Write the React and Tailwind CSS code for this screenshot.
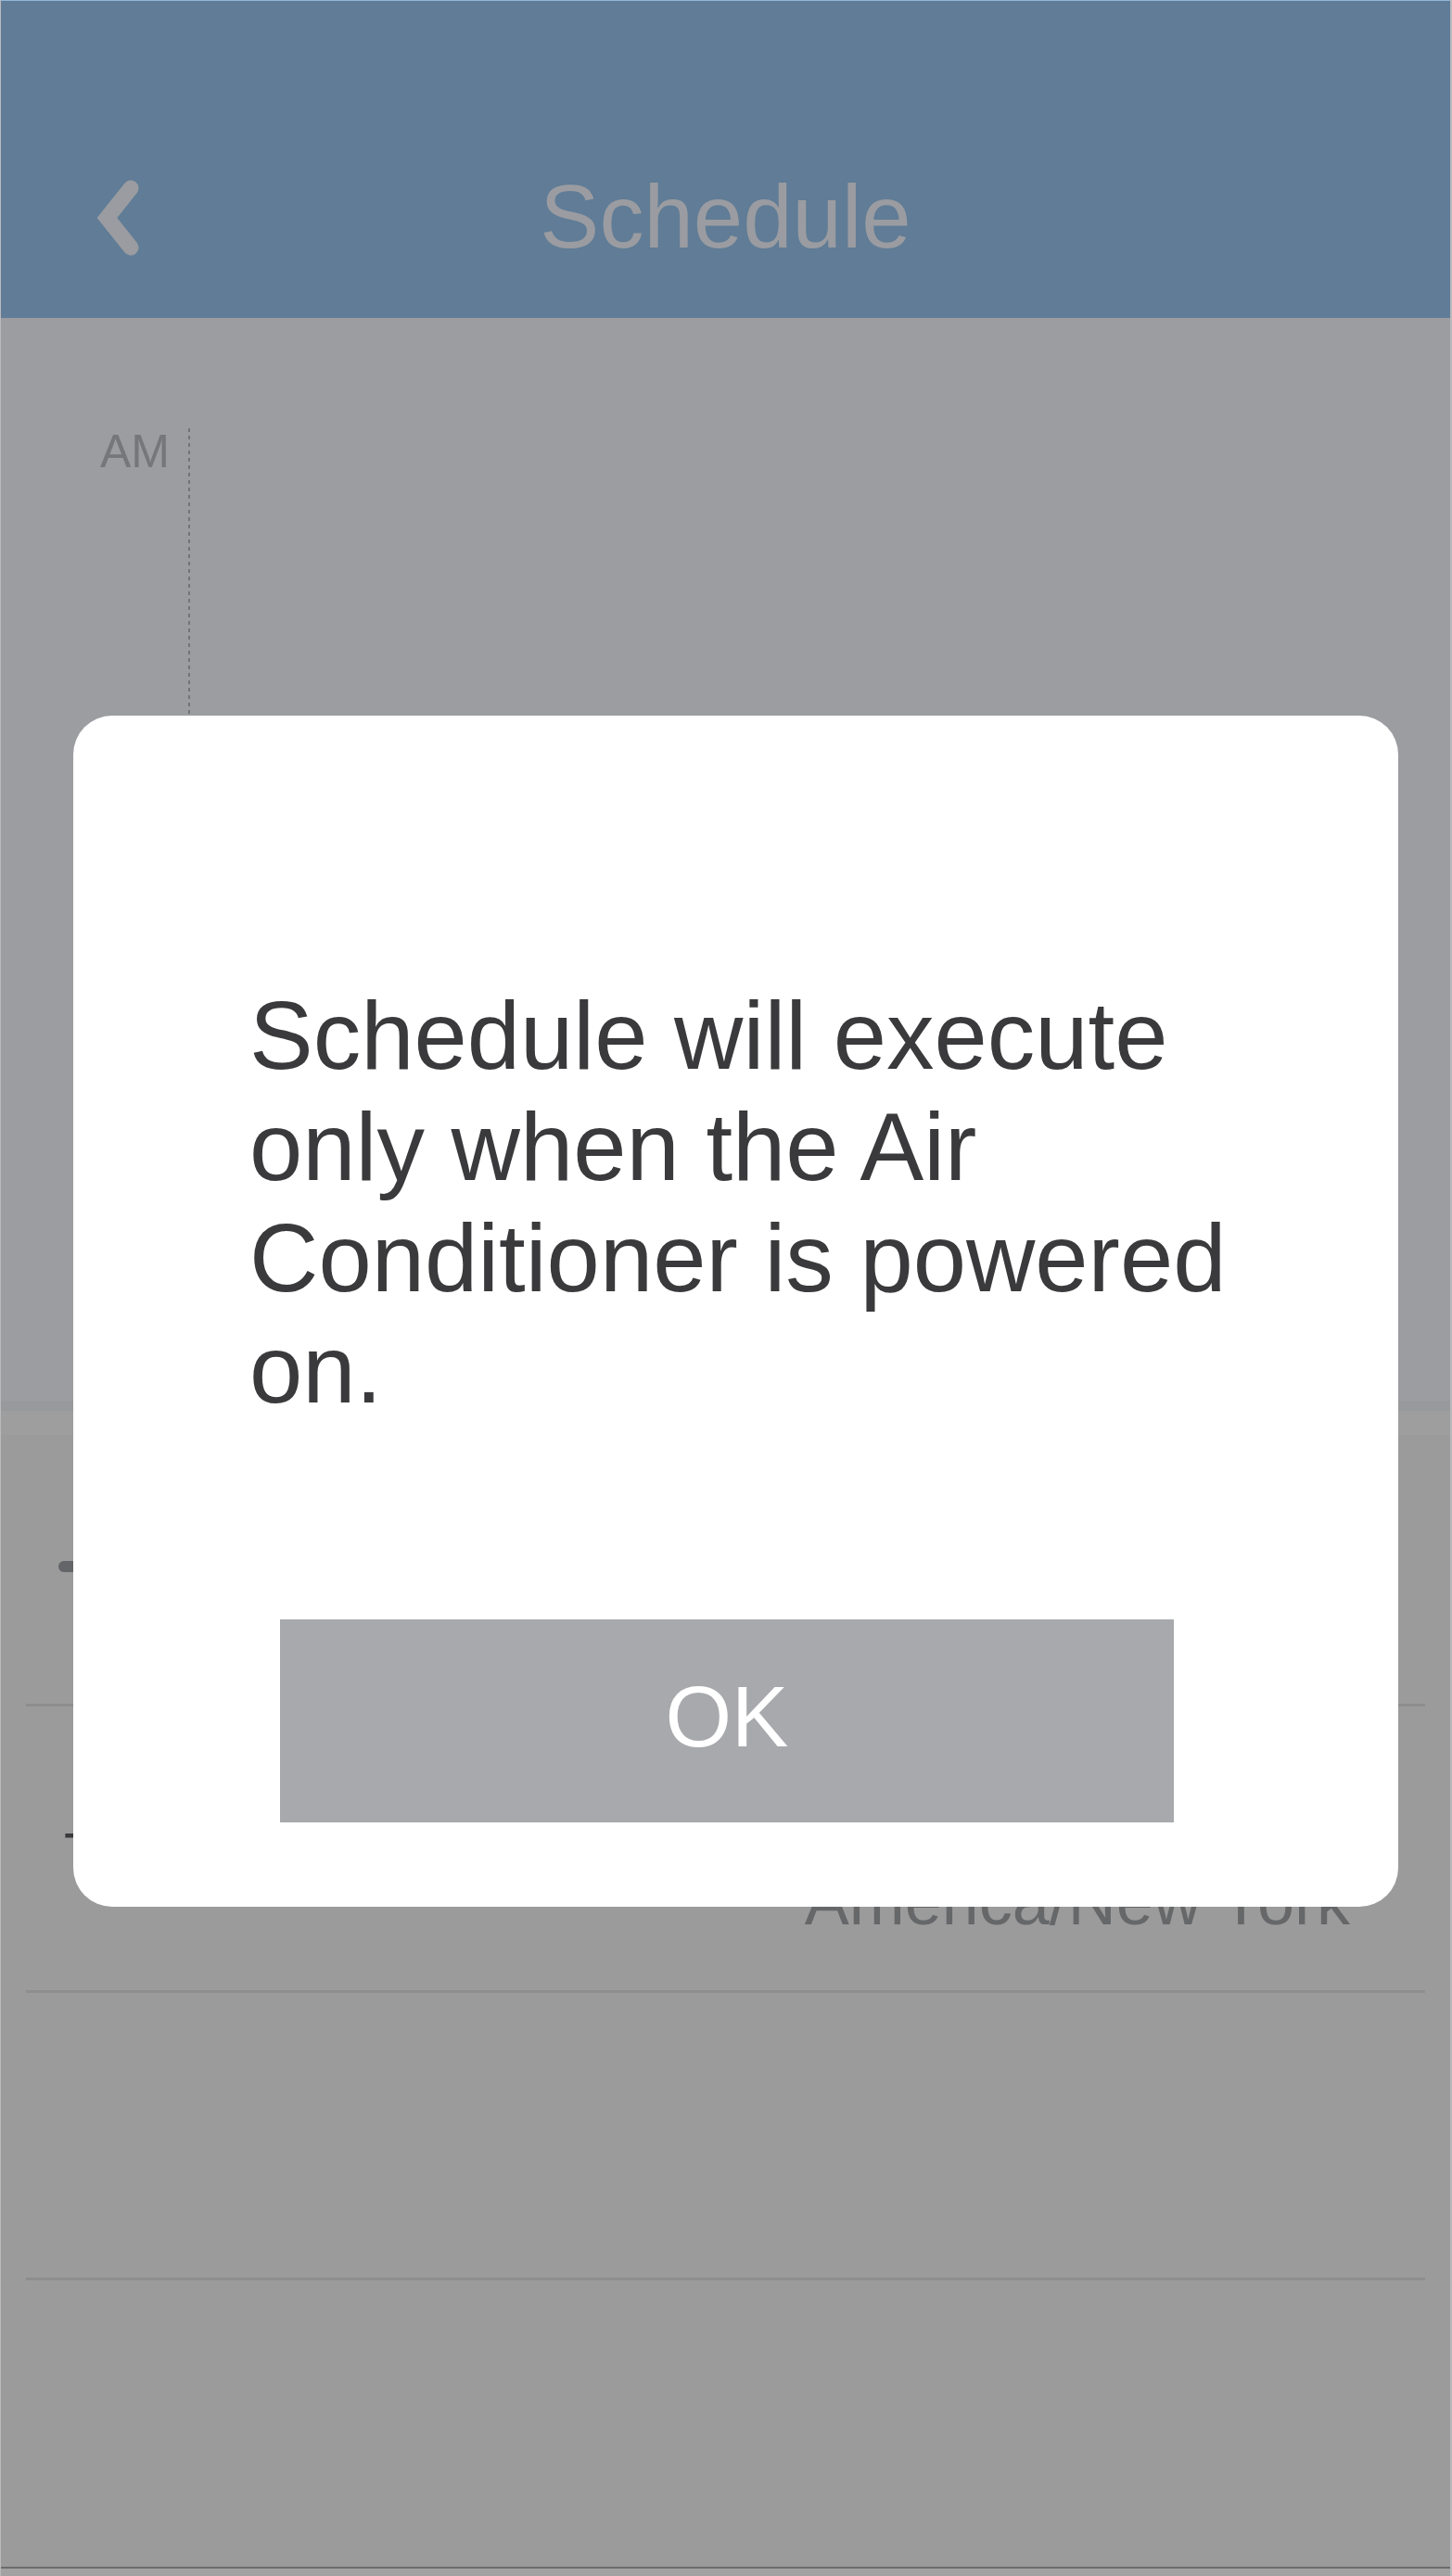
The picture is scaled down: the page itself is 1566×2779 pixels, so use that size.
export default function App() {
  return (
    <div className="relative w-[1566px] h-[2779px] overflow-hidden bg-[#9b9b9b] font-['Liberation_Sans',Arial,sans-serif] border-l border-r-2 border-[#b9babd]">
      {/* Header */}
      <header className="h-[343px] bg-[#607c96] border-t border-[#93b6d8] pt-[183px]">
        <div className="grid grid-cols-[1fr_auto_1fr] h-[100px]">
          <div className="pl-[95px]">
            <svg width="70" height="100" viewBox="96 184 70 100">
              <path
                d="M141 203 L115.5 235 L141 267"
                fill="none"
                stroke="#9a9ca1"
                strokeWidth="17"
                strokeLinecap="round"
                strokeLinejoin="miter"
              />
            </svg>
          </div>
          <h1 className="text-[96px] leading-[100px] text-[#9a9ca1] font-normal whitespace-nowrap">Schedule</h1>
          <div />
        </div>
      </header>

      {/* Upper body: timeline */}
      <div className="h-[1168px] bg-[#9c9da1] pt-[119px] flex">
        <div className="w-[182px] text-right text-[50px] leading-[50px] text-[#76777a]">AM</div>
        <div className="ml-[20px] w-[2px] bg-[repeating-linear-gradient(to_bottom,#737478_0px,#737478_4px,transparent_4px,transparent_8px)]" />
      </div>

      {/* Lower panel */}
      <div className="h-[11px] bg-[#98999b]" />
      <div className="h-[26px] bg-[#9e9e9f]" />
      <div className="mt-[136px] ml-[62px] h-[12px] w-[300px] rounded-full bg-[#646568]" />
      <div className="mt-[142px] mx-[27px] h-[3px] bg-[#8e8e90]" />
      <div className="h-[306px] pt-[128px] pl-[68px] pr-[108px]">
        <div className="text-[60px] leading-[60px] text-[#3a3a3c]">Time Zone</div>
        <div className="-mt-[14px] text-right text-[72px] leading-[72px] text-[#666769] whitespace-nowrap">America/New York</div>
      </div>
      <div className="mx-[27px] h-[3px] bg-[#8e8e90]" />
      <div className="h-[307px]" />
      <div className="mx-[27px] h-[3px] bg-[#8e8e90]" />
      <div className="h-[309px]" />
      <div className="h-[2px] bg-[#6b6b6b]" />
      <div className="h-[8px] bg-[#a2a2a2]" />

      {/* Modal */}
      <div className="absolute left-[78px] top-[772px] w-[1429px] h-[1285px] rounded-[42px] bg-white pt-[286px] pl-[190px]">
        <p className="text-[103px] leading-[120px] text-[#3a3a3c] whitespace-nowrap">
          Schedule will execute
          <br />
          only when the Air
          <br />
          Conditioner is powered
          <br />
          on.
        </p>
        <div
          role="button"
          className="mt-[209px] ml-[33px] w-[964px] h-[219px] bg-[#a8a9ad] text-white text-[92px] leading-[92px] pt-[59px] text-center"
        >
          OK
        </div>
      </div>
    </div>
  );
}
